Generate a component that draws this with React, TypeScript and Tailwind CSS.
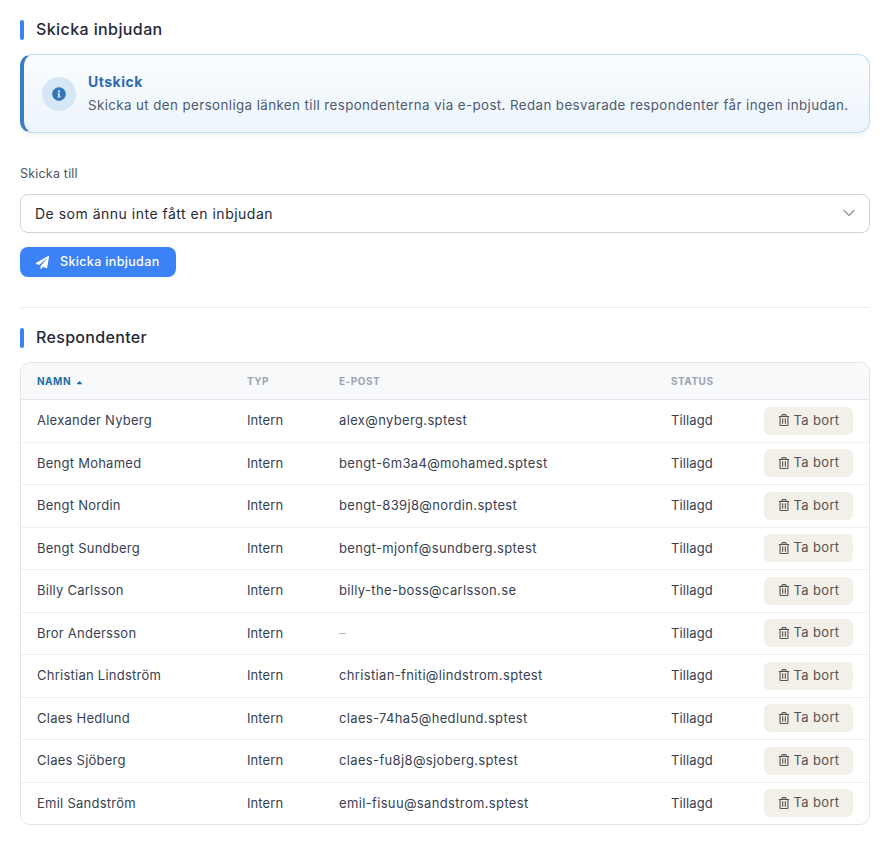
import { FC } from "react";
import { ChevronDown } from "lucide-react";
import { FaCaretUp, FaInfoCircle, FaPaperPlane, FaRegTrashAlt } from "react-icons/fa";

const rows = [
  ["Alexander Nyberg", "alex@nyberg.sptest"],
  ["Bengt Mohamed", "bengt-6m3a4@mohamed.sptest"],
  ["Bengt Nordin", "bengt-839j8@nordin.sptest"],
  ["Bengt Sundberg", "bengt-mjonf@sundberg.sptest"],
  ["Billy Carlsson", "billy-the-boss@carlsson.se"],
  ["Bror Andersson", ""],
  ["Christian Lindström", "christian-fniti@lindstrom.sptest"],
  ["Claes Hedlund", "claes-74ha5@hedlund.sptest"],
  ["Claes Sjöberg", "claes-fu8j8@sjoberg.sptest"],
  ["Emil Sandström", "emil-fisuu@sandstrom.sptest"],
];

const cols = "grid grid-cols-[210px_92px_332px_93px_1fr] items-center pl-4 pr-4";

const Heading: FC<{ title: string; spacing: string }> = ({ title, spacing }) => (
  <div className="flex h-5 items-center gap-3">
    <span className="h-5 w-1 rounded-sm bg-[#3b82f6]" />
    <h2 className={`pb-0.5 text-[16px] font-medium leading-5 text-[#1f2937] ${spacing}`}>{title}</h2>
  </div>
);

const App: FC = () => {
  return (
    <div className="min-h-[845px] bg-white px-5 pt-5 font-['Inter',sans-serif] text-[13px] text-[#374151]">
      <Heading title="Skicka inbjudan" spacing="tracking-[0.4px]" />

      <section className="mt-3.5 flex h-[79px] items-center gap-3 rounded-xl border border-l-4 border-[#bcdcf7] border-l-[#3a7dc0] bg-gradient-to-b from-[#fbfdff] to-[#edf4fc] pl-[18px] shadow-md shadow-gray-100">
        <div className="flex h-[34px] w-[34px] items-center justify-center rounded-full bg-[#d5e6f6] text-[#2f75b8]">
          <FaInfoCircle className="text-[14px]" />
        </div>
        <div>
          <div className="text-[14px] font-bold leading-[18px] tracking-[0.5px] text-[#2b6cb0]">Utskick</div>
          <p className="mt-1 whitespace-nowrap text-[13.3px] leading-5 tracking-[0.42px] text-[#4a5b70]">
            Skicka ut den personliga länken till respondenterna via e-post. Redan besvarade respondenter får ingen inbjudan.
          </p>
        </div>
      </section>

      <label className="mt-8 block text-[12.5px] leading-[18px] tracking-[0.2px] text-[#4b5563]">Skicka till</label>
      <div className="mt-[11px] flex h-[39px] items-center justify-between rounded-lg border border-[#d1d5db] pb-px pl-[14px] pr-[10px] text-[14px] tracking-[0.5px] text-[#1f2937]">
        De som ännu inte fått en inbjudan
        <ChevronDown className="h-5 w-5 text-[#9ca3af]" />
      </div>
      <button className="mt-3.5 flex h-[30px] w-[156px] items-center gap-[11px] rounded-lg bg-[#3b82f6] pl-4 text-[12.5px] font-medium tracking-[0.35px] text-white">
        <FaPaperPlane className="text-[13px]" />
        Skicka inbjudan
      </button>

      <hr className="mt-[30px] border-[#eceef1]" />

      <div className="mt-5">
        <Heading title="Respondenter" spacing="tracking-[0.33px]" />
      </div>

      <div className="mt-3.5 overflow-hidden rounded-[10px] border border-[#e2e4e9]">
        <div className={`${cols} h-[37px] border-b border-[#e5e7eb] bg-[#f8f9fb] text-[10px] font-bold tracking-[0.5px] text-[#9ca3af]`}>
          <span className="flex items-center gap-1 text-[#1d6fa5]">
            NAMN <FaCaretUp className="mt-0.5 text-[9px]" />
          </span>
          <span>TYP</span>
          <span>E-POST</span>
          <span>STATUS</span>
          <span />
        </div>
        {rows.map(([name, email], i) => (
          <div
            key={name}
            className={`${cols} ${i < rows.length - 1 ? "h-[42.5px] border-b border-[#eef0f2]" : "h-[41.5px]"} text-[13px]`}
          >
            <span className="tracking-[0.25px]">{name}</span>
            <span className="tracking-[0.1px]">Intern</span>
            {email ? <span className="tracking-[0.35px]">{email}</span> : <span className="text-[#b3b8c0]">–</span>}
            <span className="tracking-[0.1px]">Tillagd</span>
            <button className="ml-auto flex h-7 w-[89px] items-center justify-center gap-1 rounded-md bg-[#f3efe9] pb-px tracking-[0.35px] text-[#57534e]">
              <FaRegTrashAlt className="text-[12px]" />
              Ta bort
            </button>
          </div>
        ))}
      </div>
    </div>
  );
};

export default App;
